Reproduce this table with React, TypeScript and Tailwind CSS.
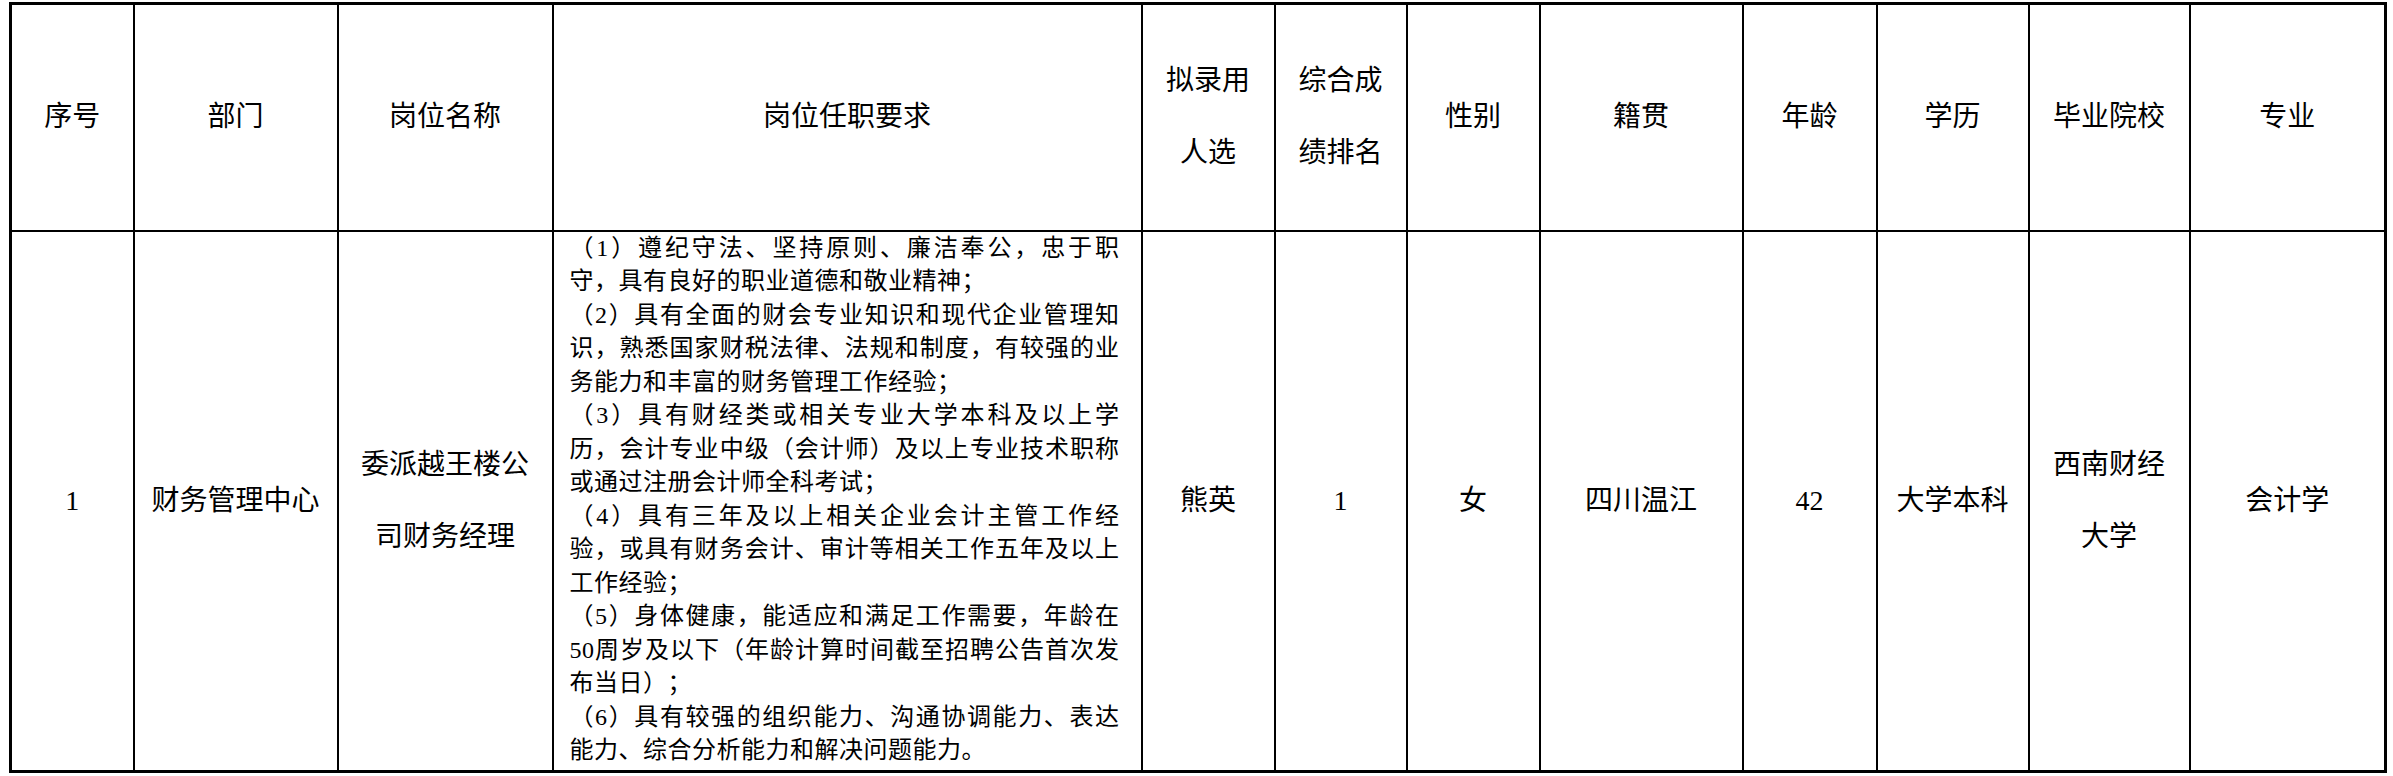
const font = { fontFamily: '"Liberation Serif", "Noto Sans CJK SC", serif' };

const requirements = [
  "（1）遵纪守法、坚持原则、廉洁奉公，忠于职守，具有良好的职业道德和敬业精神；",
  "（2）具有全面的财会专业知识和现代企业管理知识，熟悉国家财税法律、法规和制度，有较强的业务能力和丰富的财务管理工作经验；",
  "（3）具有财经类或相关专业大学本科及以上学历，会计专业中级（会计师）及以上专业技术职称或通过注册会计师全科考试；",
  "（4）具有三年及以上相关企业会计主管工作经验，或具有财务会计、审计等相关工作五年及以上工作经验；",
  "（5）身体健康，能适应和满足工作需要，年龄在50周岁及以下（年龄计算时间截至招聘公告首次发布当日）；",
  "（6）具有较强的组织能力、沟通协调能力、表达能力、综合分析能力和解决问题能力。",
];

const th = "border-2 border-black px-[16px] text-center align-middle font-normal text-[28px] leading-[72px]";
const td = "border-2 border-black px-[16px] text-center align-middle text-[28px] leading-[72px]";

export default function App() {
  return (
    <div className="min-h-screen bg-white pl-[9px] pt-[2px] text-black [text-spacing-trim:space-all]" style={font}>
      <table className="w-[2378px] table-fixed border-collapse border-[3px] border-black">
        <colgroup>
          <col className="w-[123px]" />
          <col className="w-[204px]" />
          <col className="w-[215px]" />
          <col className="w-[589px]" />
          <col className="w-[133px]" />
          <col className="w-[132px]" />
          <col className="w-[133px]" />
          <col className="w-[203px]" />
          <col className="w-[134px]" />
          <col className="w-[152px]" />
          <col className="w-[161px]" />
          <col className="w-[196px]" />
        </colgroup>
        <thead>
          <tr className="h-[227px]">
            <th className={th}>序号</th>
            <th className={th}>部门</th>
            <th className={th}>岗位名称</th>
            <th className={th}>岗位任职要求</th>
            <th className={th}>拟录用人选</th>
            <th className={th}>综合成绩排名</th>
            <th className={th}>性别</th>
            <th className={th}>籍贯</th>
            <th className={th}>年龄</th>
            <th className={th}>学历</th>
            <th className={th}>毕业院校</th>
            <th className={th}>专业</th>
          </tr>
        </thead>
        <tbody>
          <tr className="h-[541px]">
            <td className={td}>1</td>
            <td className={td}>财务管理中心</td>
            <td className={td}>委派越王楼公司财务经理</td>
            <td className="border-2 border-black pl-[16px] pr-[21px] pt-0 pb-0 align-top text-[24px] leading-[33.5px] tracking-[0.5px]">
              {requirements.map((r) => (
                <p key={r} className="text-justify">
                  {r}
                </p>
              ))}
            </td>
            <td className={td}>熊英</td>
            <td className={td}>1</td>
            <td className={td}>女</td>
            <td className={td}>四川温江</td>
            <td className={td}>42</td>
            <td className={td}>大学本科</td>
            <td className={td}>西南财经大学</td>
            <td className={td}>会计学</td>
          </tr>
        </tbody>
      </table>
    </div>
  );
}
